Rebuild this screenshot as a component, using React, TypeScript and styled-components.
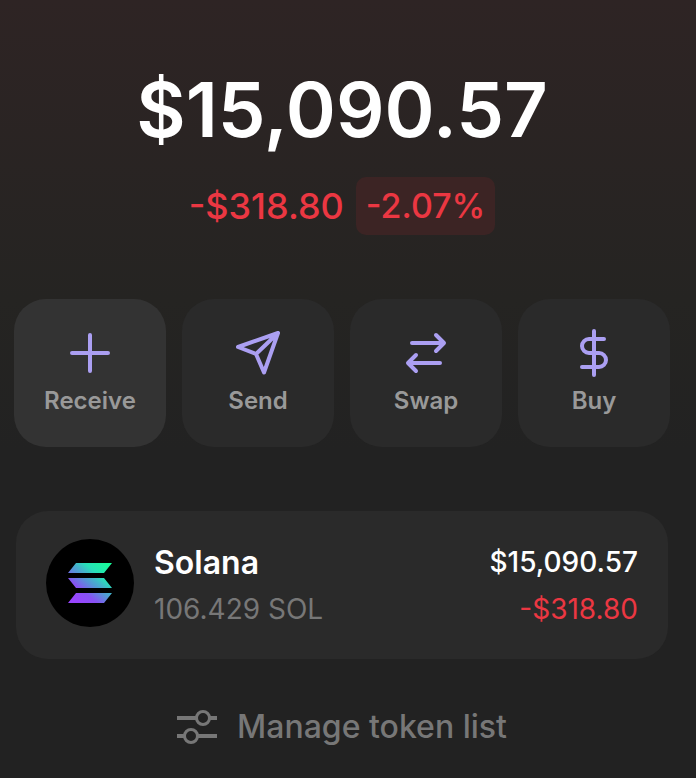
import React from "react";
import styled, { createGlobalStyle } from "styled-components";

const GlobalStyle = createGlobalStyle`
  *, *::before, *::after { box-sizing: border-box; }
  body {
    margin: 0;
    background: #222222;
    font-family: Inter, "Liberation Sans", sans-serif;
  }
`;

const Page = styled.main`
  min-height: 100vh;
  padding: 63px 26px 28px 14px;
  background: linear-gradient(180deg, #2e2424 0, #252422 300px, #222222 450px);
`;

const Summary = styled.header`
  display: flex;
  flex-direction: column;
  align-items: center;
  gap: 22px;
`;

const Balance = styled.h1`
  margin: 0;
  font-size: 76px;
  line-height: 92px;
  font-weight: 600;
  color: #ffffff;
`;

const Change = styled.div`
  display: flex;
  align-items: center;
  gap: 12px;
  font-size: 36px;
  line-height: 58px;
  font-weight: 500;
  color: #eb3742;
`;

const ChangeBadge = styled.span`
  padding: 0 10px;
  border-radius: 10px;
  background: #3c2424;
  font-size: 34px;
`;

const Actions = styled.nav`
  display: grid;
  grid-template-columns: repeat(4, 1fr);
  gap: 16px;
  margin-top: 64px;
`;

const ActionButton = styled.button<{ $active?: boolean }>`
  display: flex;
  flex-direction: column;
  align-items: center;
  gap: 10px;
  padding: 30px 0 32px;
  border: 0;
  border-radius: 32px;
  background: ${(p) => (p.$active ? "#333333" : "#2a2a2a")};
  color: #999999;
  font-family: inherit;
  font-size: 24px;
  line-height: 28px;
  font-weight: 600;
  cursor: pointer;
`;

const ActionIcon = styled.svg`
  width: 48px;
  height: 48px;
  fill: none;
  stroke: #ab9ff2;
  stroke-width: 4;
  stroke-linecap: round;
  stroke-linejoin: round;
`;

const TokenRow = styled.button`
  display: flex;
  align-items: flex-start;
  gap: 20px;
  width: calc(100% - 4px);
  margin: 64px 2px 0;
  padding: 28px 30px 26px;
  border: 0;
  border-radius: 32px;
  background: #2a2a2a;
  font-family: inherit;
  text-align: left;
  cursor: pointer;
`;

const TokenLogo = styled.svg`
  flex: none;
  width: 88px;
  height: 88px;
`;

const TokenColumn = styled.span<{ $end?: boolean }>`
  display: flex;
  flex-direction: column;
  align-items: ${(p) => (p.$end ? "flex-end" : "flex-start")};
  margin-left: ${(p) => (p.$end ? "auto" : "0")};
  font-size: 28px;
  line-height: 47px;
`;

const TokenName = styled.span`
  font-size: 32px;
  font-weight: 600;
  color: #ffffff;
`;

const TokenValue = styled.span`
  font-weight: 500;
  color: #ffffff;
`;

const TokenDetail = styled.span<{ $negative?: boolean }>`
  font-weight: 400;
  color: ${(p) => (p.$negative ? "#eb3742" : "#777777")};
`;

const ManageButton = styled.button`
  display: flex;
  align-items: center;
  gap: 20px;
  margin: 48px auto 0;
  padding: 0;
  border: 0;
  background: none;
  color: #777777;
  font-family: inherit;
  font-size: 32px;
  line-height: 40px;
  font-weight: 500;
  cursor: pointer;
`;

const SlidersIcon = styled.svg`
  width: 40px;
  height: 40px;
  fill: none;
  stroke: currentColor;
`;

const actions = [
  { label: "Receive", path: "M24 6V42M6 24H42", active: true },
  { label: "Send", path: "M44 4L4 18L22 25L30 43.5ZM44 4L22 25" },
  { label: "Swap", path: "M10 14H41.5M34 6L42 14L34 22M38 34H6.5M14 26L6 34L14 42" },
  { label: "Buy", path: "M24 2V46M34 10H19A7 7 0 0 0 19 24H29A7 7 0 0 1 29 38H12" },
];

export default function App() {
  return (
    <>
      <GlobalStyle />
      <Page>
        <Summary>
          <Balance>$15,090.57</Balance>
          <Change>
            <span>-$318.80</span>
            <ChangeBadge>-2.07%</ChangeBadge>
          </Change>
        </Summary>

        <Actions aria-label="Wallet actions">
          {actions.map((action) => (
            <ActionButton key={action.label} type="button" $active={action.active}>
              <ActionIcon viewBox="0 0 48 48" aria-hidden="true">
                <path d={action.path} />
              </ActionIcon>
              {action.label}
            </ActionButton>
          ))}
        </Actions>

        <TokenRow type="button">
          <TokenLogo viewBox="0 0 88 88" aria-hidden="true">
            <defs>
              <linearGradient id="solana" gradientUnits="userSpaceOnUse" x1="27" y1="65" x2="61" y2="23">
                <stop offset="0.08" stopColor="#9945ff" />
                <stop offset="0.3" stopColor="#8752f3" />
                <stop offset="0.5" stopColor="#5497d5" />
                <stop offset="0.6" stopColor="#43b4ca" />
                <stop offset="0.72" stopColor="#28e0b9" />
                <stop offset="0.97" stopColor="#19fb9b" />
              </linearGradient>
            </defs>
            <circle cx="44" cy="44" r="44" fill="#000000" />
            <path
              fill="url(#solana)"
              d="M30 24H66L58 34H22ZM22 39H58L66 49H30ZM30 54H66L58 64H22Z"
            />
          </TokenLogo>
          <TokenColumn>
            <TokenName>Solana</TokenName>
            <TokenDetail>106.429 SOL</TokenDetail>
          </TokenColumn>
          <TokenColumn $end>
            <TokenValue>$15,090.57</TokenValue>
            <TokenDetail $negative>-$318.80</TokenDetail>
          </TokenColumn>
        </TokenRow>

        <ManageButton type="button">
          <SlidersIcon viewBox="0 0 40 40" aria-hidden="true">
            <path strokeWidth="4" d="M0 11H19M33 11H40M0 29H7M21 29H40" />
            <circle strokeWidth="3" cx="26" cy="11" r="6.5" />
            <circle strokeWidth="3" cx="14" cy="29" r="6.5" />
          </SlidersIcon>
          Manage token list
        </ManageButton>
      </Page>
    </>
  );
}
